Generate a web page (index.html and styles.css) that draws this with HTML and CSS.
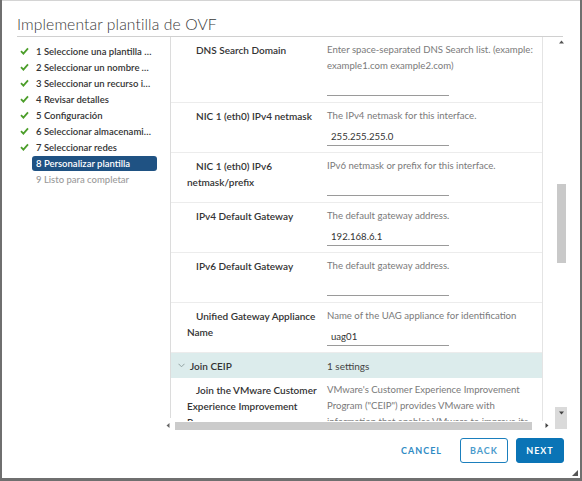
FILE: index.html
```html
<!DOCTYPE html>
<html lang="es">
<head>
<meta charset="utf-8">
<title>Implementar plantilla de OVF</title>
<link rel="stylesheet" href="styles.css">
</head>
<body>
<div class="dialog">
  <header class="head">
    <h1 class="title">Implementar plantilla de OVF</h1>
  </header>
  <div class="main">
    <nav class="steps">
      <ul class="step-list">
        <li class="step done"><span class="ico"><svg width="9" height="8" viewBox="0 0 9 8"><path d="M1 4.2 L3.4 6.6 L8 1.4" fill="none" stroke="#4c9e2a" stroke-width="1.8"/></svg></span><span class="lbl">1 Seleccione una plantilla de OVF</span></li>
        <li class="step done"><span class="ico"><svg width="9" height="8" viewBox="0 0 9 8"><path d="M1 4.2 L3.4 6.6 L8 1.4" fill="none" stroke="#4c9e2a" stroke-width="1.8"/></svg></span><span class="lbl">2 Seleccionar un nombre y una carpeta</span></li>
        <li class="step done"><span class="ico"><svg width="9" height="8" viewBox="0 0 9 8"><path d="M1 4.2 L3.4 6.6 L8 1.4" fill="none" stroke="#4c9e2a" stroke-width="1.8"/></svg></span><span class="lbl">3 Seleccionar un recurso informático</span></li>
        <li class="step done"><span class="ico"><svg width="9" height="8" viewBox="0 0 9 8"><path d="M1 4.2 L3.4 6.6 L8 1.4" fill="none" stroke="#4c9e2a" stroke-width="1.8"/></svg></span><span class="lbl">4 Revisar detalles</span></li>
        <li class="step done"><span class="ico"><svg width="9" height="8" viewBox="0 0 9 8"><path d="M1 4.2 L3.4 6.6 L8 1.4" fill="none" stroke="#4c9e2a" stroke-width="1.8"/></svg></span><span class="lbl">5 Configuración</span></li>
        <li class="step done"><span class="ico"><svg width="9" height="8" viewBox="0 0 9 8"><path d="M1 4.2 L3.4 6.6 L8 1.4" fill="none" stroke="#4c9e2a" stroke-width="1.8"/></svg></span><span class="lbl">6 Seleccionar almacenamiento</span></li>
        <li class="step done"><span class="ico"><svg width="9" height="8" viewBox="0 0 9 8"><path d="M1 4.2 L3.4 6.6 L8 1.4" fill="none" stroke="#4c9e2a" stroke-width="1.8"/></svg></span><span class="lbl">7 Seleccionar redes</span></li>
        <li class="step active"><span class="ico"></span><span class="lbl">8 Personalizar plantilla</span></li>
        <li class="step todo"><span class="ico"></span><span class="lbl">9 Listo para completar</span></li>
      </ul>
    </nav>
    <section class="content">
      <div class="viewport">
        <div class="grid">
          <div class="row">
            <div class="key">DNS Search Domain</div>
            <div class="val"><div class="desc">Enter space-separated DNS Search list. (example: example1.com example2.com)</div><div class="field"></div></div>
          </div>
          <div class="row">
            <div class="key">NIC 1 (eth0) IPv4 netmask</div>
            <div class="val"><div class="desc">The IPv4 netmask for this interface.</div><div class="field">255.255.255.0</div></div>
          </div>
          <div class="row">
            <div class="key">NIC 1 (eth0) IPv6 netmask/prefix</div>
            <div class="val"><div class="desc">IPv6 netmask or prefix for this interface.</div><div class="field"></div></div>
          </div>
          <div class="row">
            <div class="key">IPv4 Default Gateway</div>
            <div class="val"><div class="desc">The default gateway address.</div><div class="field">192.168.6.1</div></div>
          </div>
          <div class="row">
            <div class="key">IPv6 Default Gateway</div>
            <div class="val"><div class="desc">The default gateway address.</div><div class="field"></div></div>
          </div>
          <div class="row">
            <div class="key">Unified Gateway Appliance Name</div>
            <div class="val"><div class="desc">Name of the UAG appliance for identification</div><div class="field">uag01</div></div>
          </div>
          <div class="row group">
            <div class="gkey"><svg class="chev" width="7" height="5" viewBox="0 0 7 5"><path d="M0.5 0.8 L3.5 3.8 L6.5 0.8" fill="none" stroke="#8a9a9a" stroke-width="0.9"/></svg>Join CEIP</div>
            <div class="gval">1 settings</div>
          </div>
          <div class="row last">
            <div class="key">Join the VMware Customer Experience Improvement Program</div>
            <div class="val"><div class="desc">VMware's Customer Experience Improvement Program ("CEIP") provides VMware with information that enables VMware to improve its products and services.</div></div>
          </div>
        </div>
      </div>
      <div class="hscroll">
        <span class="arrow"><svg width="4" height="5" viewBox="0 0 4 5"><path d="M3.5 0 L0.5 2.5 L3.5 5 Z" fill="#666"/></svg></span>
        <span class="hthumb"></span>
        <span class="arrow right"><svg width="4" height="5" viewBox="0 0 4 5"><path d="M0.5 0 L3.5 2.5 L0.5 5 Z" fill="#444"/></svg></span>
      </div>
    </section>
    <div class="vscroll">
      <span class="varrow"><svg width="5" height="4" viewBox="0 0 5 4"><path d="M0 3.5 L2.5 0.5 L5 3.5 Z" fill="#555"/></svg></span>
      <span class="vthumb"></span>
      <span class="vbtn"><svg width="5" height="4" viewBox="0 0 5 4"><path d="M0 0.5 L2.5 3.5 L5 0.5 Z" fill="#444"/></svg></span>
    </div>
  </div>
  <footer class="foot">
    <button class="btn flat" type="button">Cancel</button>
    <button class="btn outline" type="button">Back</button>
    <button class="btn primary" type="button">Next</button>
    <svg class="grip" width="6" height="6" viewBox="0 0 6 6"><path d="M6 0 L6 6 L0 6 Z" fill="#555"/></svg>
  </footer>
</div>
</body>
</html>
```

FILE: styles.css
```css
html, body {
  margin: 0;
  padding: 0;
}
body {
  background: #6f6f6f;
  width: 582px;
  height: 481px;
  overflow: hidden;
  font-family: Lato, "Liberation Sans", sans-serif;
}
.dialog {
  position: relative;
  margin-left: 2px;
  width: 578px;
  height: 478px;
  background: #fff;
  border-top: 1px solid #d4d4d4;
  box-sizing: border-box;
  display: flex;
  flex-direction: column;
}
.head {
  padding: 0 17px 0 15px;
}
.title {
  margin: 0;
  height: 36px;
  box-sizing: border-box;
  padding-top: 13px;
  font-size: 15.7px;
  line-height: 20px;
  font-weight: 300;
  color: #3a3a3a;
  border-bottom: 1px solid #d0d0d0;
  letter-spacing: 0.1px;
}
.main {
  display: flex;
  height: 393px;
}
.steps {
  width: 169px;
  height: 381px;
  box-sizing: border-box;
  border-right: 1px solid #dcdcdc;
  flex: none;
}
.step-list {
  list-style: none;
  margin: 0;
  padding: 6px 0 0 18px;
}
.step {
  display: flex;
  align-items: center;
  height: 16px;
}
.ico {
  width: 12px;
  display: flex;
  align-items: center;
  flex: none;
}
.lbl {
  width: 125px;
  height: 15px;
  box-sizing: border-box;
  padding: 0 4px;
  font-size: 9.5px;
  line-height: 15px;
  font-weight: 600;
  color: #333;
  white-space: nowrap;
  overflow: hidden;
  text-overflow: ellipsis;
  border-radius: 3px;
}
.active .lbl {
  background: #1f5283;
  color: #fff;
}
.todo .lbl {
  color: #9a9a9a;
  font-weight: 500;
}
.content {
  width: 382px;
  flex: none;
  display: flex;
  flex-direction: column;
}
.viewport {
  height: 384px;
  overflow: hidden;
}
.grid {
  width: 372px;
  border-right: 1px solid #e4e4e4;
  box-sizing: border-box;
}
.row {
  display: grid;
  grid-template-columns: 156px 1fr;
  border-bottom: 1px solid #ececec;
  padding: 5px 0 6px;
}
.key {
  padding-left: 16px;
  text-indent: 9px;
  padding-right: 6px;
  font-size: 10px;
  line-height: 16px;
  font-weight: 600;
  color: #333;
}
.desc {
  font-size: 9.6px;
  line-height: 16px;
  color: #7a7a7a;
  padding-right: 8px;
}
.field {
  width: 122px;
  height: 22px;
  box-sizing: border-box;
  border-bottom: 1px solid #9a9a9a;
  padding: 6px 0 0 4px;
  font-size: 9.6px;
  line-height: 14px;
  color: #333;
}
.group {
  background: #dcecec;
  padding: 0;
  height: 25px;
  box-sizing: border-box;
  align-items: center;
  border-bottom: none;
}
.gkey {
  padding-left: 7px;
  display: flex;
  align-items: center;
  font-size: 10px;
  font-weight: 600;
  color: #333;
}
.chev {
  margin-right: 5px;
}
.gval {
  font-size: 10px;
  color: #444;
}
.last {
  border-bottom: none;
  padding-top: 4px;
}
.hscroll {
  display: flex;
  align-items: center;
  height: 9px;
  margin-left: -7px;
}
.arrow {
  width: 8px;
  display: flex;
  justify-content: center;
  flex: none;
}
.hthumb {
  margin-left: 3px;
  width: 357px;
  height: 8px;
  background: #cbcbcb;
  flex: none;
}
.arrow.right {
  margin-left: 11px;
}
.vscroll {
  width: 12px;
  margin-left: 2px;
  flex: none;
  display: flex;
  flex-direction: column;
  align-items: center;
}
.varrow {
  margin-top: 3px;
  height: 4px;
  display: flex;
}
.vthumb {
  margin-top: 140px;
  width: 9px;
  height: 79px;
  background: #c9c9c9;
}
.vbtn {
  margin-top: 144px;
  width: 12px;
  height: 22px;
  background: #dadada;
  display: flex;
  justify-content: center;
  padding-top: 4px;
  box-sizing: border-box;
}
.foot {
  flex: 1;
  display: flex;
  justify-content: flex-end;
  align-items: flex-start;
  padding: 8px 16px 0 0;
  gap: 8px;
}
.btn {
  height: 25px;
  box-sizing: border-box;
  padding: 0 8px;
  border-radius: 3px;
  font-family: Lato, "Liberation Sans", sans-serif;
  font-size: 9px;
  font-weight: 700;
  letter-spacing: 1px;
  text-transform: uppercase;
  cursor: pointer;
}
.flat {
  background: transparent;
  border: 1px solid transparent;
  color: #2f8bc4;
  margin-right: 1px;
}
.outline {
  width: 48px;
  background: #fff;
  border: 1px solid #1b7fbd;
  color: #4a9bcc;
}
.primary {
  width: 48px;
  background: #0a74b6;
  border: 1px solid #0a74b6;
  color: #fff;
}
.grip {
  position: absolute;
  right: 2px;
  bottom: 2px;
}
```
